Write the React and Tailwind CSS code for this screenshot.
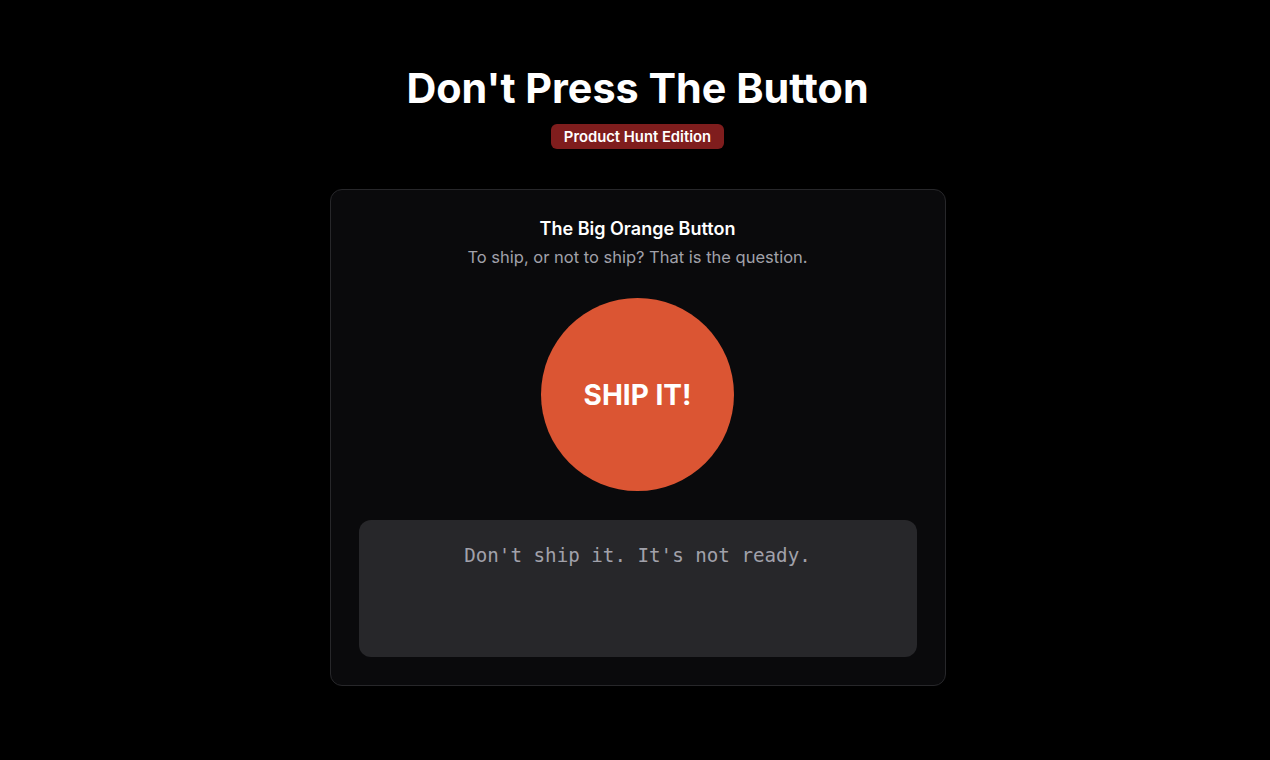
export default function App() {
  return (
    <div className="min-h-screen w-full bg-black flex flex-col items-center pl-[5px]" style={{ fontFamily: 'Inter, "Noto Sans", sans-serif' }}>
      <h1 className="mt-[64px] text-[41.3px] leading-[48px] font-bold text-white">Don't Press The Button</h1>
      <div className="mt-[12px] h-[25px] px-[13px] pt-[2px] rounded-md bg-[#7f1d1d] text-white text-[14.8px] font-semibold flex items-center">Product Hunt Edition</div>
      <div className="mt-[40px] w-[616px] rounded-xl border border-[#27272a] bg-[#0a0a0c] px-[28px] pt-[27px] pb-[28px] flex flex-col items-center">
        <div className="text-[18px] leading-[24px] font-semibold text-white">The Big Orange Button</div>
        <div className="mt-[4px] text-[16.5px] leading-[24px] text-[#a1a1aa]">To ship, or not to ship? That is the question.</div>
        <button className="mt-[29px] w-[193px] h-[193px] rounded-full bg-[#db5533] text-white text-[28px] font-bold flex items-center justify-center">SHIP IT!</button>
        <div className="mt-[29px] w-full h-[137px] rounded-xl bg-[#27272a] pt-[22px] flex justify-center">
          <div className="text-[19.2px] leading-[28px] text-[#a1a1aa]" style={{ fontFamily: '"DejaVu Sans Mono", monospace' }}>Don't ship it. It's not ready.</div>
        </div>
      </div>
    </div>
  );
}
